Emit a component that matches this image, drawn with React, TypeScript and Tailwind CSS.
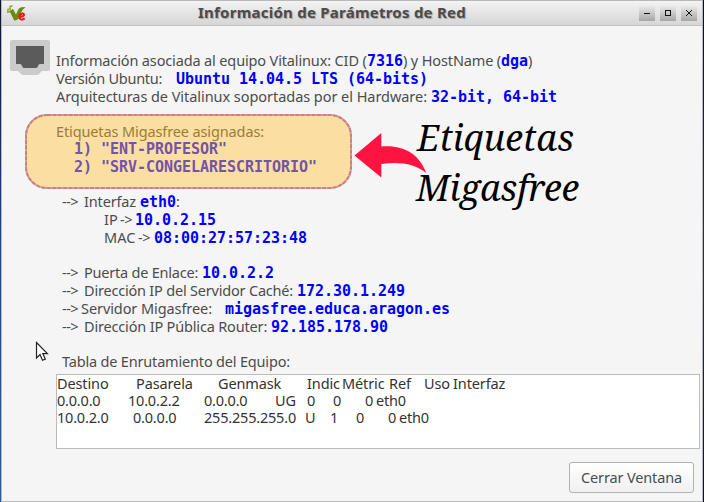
import type { ReactNode } from "react";

type Props = { className?: string; children?: ReactNode };

// One run of label text, sized to the column it occupies.
function T({ className = "", children }: Props) {
  return <span className={`block shrink-0 ${className}`}>{children}</span>;
}

// Monospaced value highlighted in blue.
function Mono({ className = "text-[#0000fb]", children }: Props) {
  return (
    <span className={`block shrink-0 font-['DejaVu_Sans_Mono',monospace] text-[15px] leading-[16px] font-bold tracking-[-0.03px] ${className}`}>
      {children}
    </span>
  );
}

function Row({ className = "h-[18px]", children }: Props) {
  return <div className={`flex items-baseline whitespace-pre ${className}`}>{children}</div>;
}

function WindowButton({ children }: Props) {
  return (
    <button className="flex size-4 items-center justify-center bg-linear-to-b from-[#eeeeee] to-[#a6a6a6]">
      <svg width="16" height="16" viewBox="0 0 16 16" fill="none" stroke="#111" shapeRendering="crispEdges">
        {children}
      </svg>
    </button>
  );
}

function TitleBar() {
  return (
    <header className="flex h-[26px] shrink-0 items-center border-t border-b border-t-[#b9b9b9] border-b-[#c2c2c2] bg-linear-to-b from-[#f3f3f3] to-[#d6d6d6] pr-[5px] pl-[5px]">
      <svg width="19" height="17" viewBox="0 0 19 17" className="shrink-0">
        <path d="M5.500 .8L3 1.500L3.300 4L1 4.300L.8 7L3.500 6.500" fill="none" stroke="#93a82a" strokeWidth="1.500" />
        <path d="M2.500 6L6 4L9 9.500L11.500 4L14 2.200L18.500 2L15.500 5L10.800 14.500L7.300 15.800Z" fill="#6b8a12" />
        <path d="M12.600 11.700C15.400 11.900 17.600 11 16.900 9.300C16.100 7.700 12.800 8.700 12.400 11.500C12 14.500 14.900 15.500 17.700 13.400" fill="none" stroke="#f31616" strokeWidth="2" />
      </svg>
      <h1 className="ml-[172px] w-[442px] text-[15px] leading-5 font-bold tracking-[0.24px] whitespace-nowrap text-[#4b4b4b] [text-shadow:1px_1px_1px_#a5a5a5]">
        <span className="-mt-[2px] block">Información de Parámetros de Red</span>
      </h1>
      <div className="flex gap-[5px]">
        <WindowButton><path d="M5 8.5H11" /></WindowButton>
        <WindowButton><rect x="5.5" y="5.5" width="5" height="5" /></WindowButton>
        <WindowButton><path d="M5 5L11 11M11 5L5 11" /></WindowButton>
      </div>
    </header>
  );
}

function EthernetIcon() {
  return (
    <svg width="40" height="36" viewBox="0 0 40 36" className="shrink-0">
      <path d="M2 0H38Q40 0 40 2V29Q40 31 38 31H32L29 34Q28 35 27 35H13Q12 35 11 34L8 31H2Q0 31 0 29V2Q0 0 2 0Z" fill="#cbcbcb" />
      <path d="M6 6H34V24H30Q29 24 28.500 25L27.500 27Q27 28 26 28H14Q13 28 12.500 27L11.500 25Q11 24 10 24H6Z" fill="#5b5b5b" />
    </svg>
  );
}

function MigasfreeTags() {
  return (
    <section className="relative ml-[23px] h-[75px] w-[327px] rounded-[22px] bg-[#fbdfa2] pt-[9px] pl-[31px]">
      <svg width="327" height="75" className="absolute top-0 left-0" fill="none">
        <rect x="1" y="1" width="325" height="73" rx="21" stroke="#dfa398" strokeWidth="2" />
        <rect x="1" y="1" width="325" height="73" rx="21" stroke="#ca8087" strokeWidth="2" strokeDasharray="4 1.4" />
      </svg>
      <Row><T className="tracking-[-0.12px] text-[#9a7d38]">Etiquetas Migasfree asignadas:</T></Row>
      <Row className="h-[18px] pl-[18px]"><Mono className="text-[#7354a5]">{'1) "ENT-PROFESOR"'}</Mono></Row>
      <Row className="h-[18px] pl-[18px]"><Mono className="text-[#7354a5]">{'2) "SRV-CONGELARESCRITORIO"'}</Mono></Row>
    </section>
  );
}

// Callout drawn over the window, pointing at the tag list.
function Callout() {
  return (
    <div className="absolute top-[120px] left-[354px] flex">
      <svg width="73" height="60" viewBox="0 0 73 60" className="shrink-0">
        <path d="M.5 35.500L27.300 13V26.500C48 24.500 65 33 72.300 53C60 43 45 41.500 27.300 44V57.500Z" fill="#ff1340" />
      </svg>
      <p className="-ml-[10px] font-['Noto_Serif','DejaVu_Serif_Condensed',serif] text-[36px] leading-[50px] whitespace-nowrap text-black italic">
        <span className="-mt-[7px] block">Etiquetas</span>
        <span className="-ml-px block tracking-[-0.25px]">Migasfree</span>
      </p>
    </div>
  );
}

function RoutingTable() {
  return (
    <div className="ml-[54px] h-[75px] w-[644px] border border-[#bcbcbc] bg-white text-[#333]">
      <Row className="h-[17px] tracking-[-0.12px]">
        <T className="w-[79px]">Destino</T>
        <T className="w-[82px]">Pasarela</T>
        <T className="w-[89px]">Genmask</T>
        <T className="w-[35px]">Indic</T>
        <T className="w-[47px]">Métric</T>
        <T className="w-[35px]">Ref</T>
        <T className="w-[29px]">Uso</T>
        <T>Interfaz</T>
      </Row>
      <Row className="h-[17px] tracking-[-0.2px]">
        <T className="w-[71px]">0.0.0.0</T>
        <T className="w-[76px]">10.0.2.2</T>
        <T className="w-[71px]">0.0.0.0</T>
        <T className="w-[32px]">UG</T>
        <T className="w-[26px]">0</T>
        <T className="w-[32px]">0</T>
        <T className="w-[11px]">0</T>
        <T>eth0</T>
      </Row>
      <Row className="h-[17px] tracking-[-0.2px]">
        <T className="w-[76px]">10.0.2.0</T>
        <T className="w-[71px]">0.0.0.0</T>
        <T className="w-[101px]">255.255.255.0</T>
        <T className="w-[25px]">U</T>
        <T className="w-[26px]">1</T>
        <T className="w-[32px]">0</T>
        <T className="w-[11px]">0</T>
        <T>eth0</T>
      </Row>
    </div>
  );
}

export default function App() {
  return (
    <div className="relative flex h-[502px] w-[704px] overflow-hidden font-['Noto_Sans',sans-serif] text-[14.5px] leading-[16px] text-[#4c4c4c]">
      <div className="w-px shrink-0 bg-linear-to-b from-[#0a1238] via-[#1c4a86] to-[#2a5c9c]" />
      <div className="flex w-[702px] shrink-0 flex-col border-x border-b border-[#b9b9b9] bg-[#f5f5f5]">
        <TitleBar />
        <main className="flex flex-col">
          <div className="flex pt-[14px] pl-[8px]">
            <EthernetIcon />
            <div className="ml-[6px] pt-[12px]">
              <Row>
                <T className="w-[311px] tracking-[-0.14px]">Información asociada al equipo Vitalinux: CID (</T>
                <Mono>7316</Mono>
                <T className="w-[98px] tracking-[-0.14px]">{") y HostName ("}</T>
                <Mono>dga</Mono>
                <T>)</T>
              </Row>
              <Row>
                <T className="w-[120px] tracking-[-0.28px]">Versión Ubuntu:</T>
                <Mono>Ubuntu 14.04.5 LTS (64-bits)</Mono>
              </Row>
              <Row>
                <T className="w-[375px] tracking-[-0.05px]">Arquitecturas de Vitalinux soportadas por el Hardware:</T>
                <Mono>32-bit, 64-bit</Mono>
              </Row>
            </div>
          </div>
          <div className="h-[8px]" />
          <MigasfreeTags />
          <div className="pt-[4px] pl-[60px]">
            <Row>
              <T className="w-[22px] tracking-[-0.5px]">{"-->"}</T>
              <T className="w-[56px] tracking-[-0.15px]">Interfaz</T>
              <Mono>eth0</Mono>
              <T>:</T>
            </Row>
            <Row className="h-[18px] pl-[42px]">
              <T className="w-[16px]">IP</T>
              <T className="w-[15px] tracking-[-0.5px]">{"->"}</T>
              <Mono>10.0.2.15</Mono>
            </Row>
            <Row className="h-[18px] pl-[42px]">
              <T className="w-[34px]">MAC</T>
              <T className="w-[16px] tracking-[-0.5px]">{"->"}</T>
              <Mono>08:00:27:57:23:48</Mono>
            </Row>
          </div>
          <div className="pt-[17px] pl-[60px]">
            <Row>
              <T className="w-[22px] tracking-[-0.5px]">{"-->"}</T>
              <T className="w-[118px] tracking-[-0.22px]">Puerta de Enlace:</T>
              <Mono>10.0.2.2</Mono>
            </Row>
            <Row>
              <T className="w-[22px] tracking-[-0.5px]">{"-->"}</T>
              <T className="w-[213px] tracking-[-0.2px]">Dirección IP del Servidor Caché:</T>
              <Mono>172.30.1.249</Mono>
            </Row>
            <Row>
              <T className="w-[19px] tracking-[-0.5px]">{"-->"}</T>
              <T className="w-[144px] tracking-[-0.08px]">Servidor Migasfree:</T>
              <Mono>migasfree.educa.aragon.es</Mono>
            </Row>
            <Row>
              <T className="w-[22px] tracking-[-0.5px]">{"-->"}</T>
              <T className="w-[187px] tracking-[-0.17px]">Dirección IP Pública Router:</T>
              <Mono>92.185.178.90</Mono>
            </Row>
          </div>
          <h2 className="mt-[17px] mb-[3px] ml-[60px] h-[18px] tracking-[-0.18px]">Tabla de Enrutamiento del Equipo:</h2>
          <RoutingTable />
          <button className="mt-[13px] mr-[8px] h-[31px] w-[125px] self-end rounded-[3px] border border-[#b2b2b2] bg-linear-to-b from-white to-[#f0f0f0] pb-[2px] text-center tracking-[-0.14px] whitespace-nowrap">
            Cerrar Ventana
          </button>
        </main>
      </div>
      <div className="w-px shrink-0 bg-linear-to-b from-[#0a0d26] via-[#30303c] to-[#0b1030]" />
      <Callout />
      <svg width="15" height="22" viewBox="0 0 15 22" className="absolute top-[341px] left-[35px]">
        <path d="M1.500 1.500V17L5 13.600L7.500 19.300L10.300 18.100L7.800 12.600H12.400Z" fill="#fff" stroke="#222" strokeWidth="1.200" />
      </svg>
    </div>
  );
}
